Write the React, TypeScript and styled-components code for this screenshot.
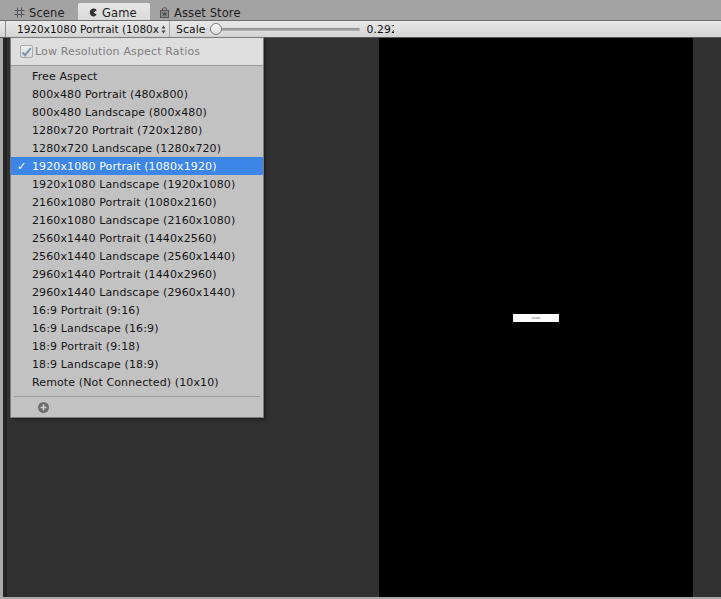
import React from "react";
import styled, { createGlobalStyle } from "styled-components";

const Global = createGlobalStyle`
  html, body { margin: 0; padding: 0; background: #a2a2a2; }
  body { font-family: "DejaVu Sans", Verdana, sans-serif; font-size: 11px; }
  * { box-sizing: border-box; }
`;

const Window = styled.div`
  position: relative;
  width: 721px;
  height: 599px;
  background: #a2a2a2;
  display: flex;
  flex-direction: column;
  overflow: hidden;
`;

const TabBar = styled.div`
  height: 20px;
  display: flex;
  align-items: flex-end;
  padding-left: 9px;
  background: #a3a3a3;
`;

const Tab = styled.div<{ $active?: boolean; $w: number }>`
  width: ${(p) => p.$w}px;
  height: 17px;
  display: flex;
  align-items: center;
  gap: 4px;
  padding-top: 2px;
  padding-left: ${(p) => (p.$active ? 11 : 5)}px;
  color: #1e1e1e;
  font-size: 11.5px;
  letter-spacing: 0.1px;
  background: ${(p) => (p.$active ? "linear-gradient(#e6e6e6, #dadada)" : "transparent")};
  border-radius: 2px 2px 0 0;
  margin-right: ${(p) => (p.$active ? 4 : 3)}px;
`;

const TabIcon = styled.svg`
  flex: none;
`;

const Toolbar = styled.div`
  height: 18px;
  display: flex;
  align-items: center;
  background: linear-gradient(#e8e8e8, #d4d4d4);
  border-top: 1px solid #6f6f6f;
  border-bottom: 1px solid #5a5a5a;
  padding-left: 5px;
`;

const EdgeTick = styled.div`
  width: 1px;
  height: 100%;
  background: #8a8a8a;
  margin-right: 4px;
`;

const Popup = styled.div`
  width: 160px;
  flex: none;
  height: 100%;
  display: flex;
  align-items: center;
  justify-content: space-between;
  padding: 0 3px 0 7px;
  color: #111;
  font-size: 10.5px;
  border-right: 1px solid #a8a8a8;
  white-space: nowrap;
`;

const Arrows = styled.svg`
  flex: none;
`;

const Label = styled.span`
  margin-left: 6px;
  color: #111;
  font-size: 10.8px;
  letter-spacing: 0.1px;
`;

const Slider = styled.div`
  position: relative;
  margin-left: 4px;
  width: 150px;
  height: 12px;
  display: flex;
  align-items: center;
`;

const Track = styled.div`
  flex: 1;
  height: 3px;
  border-radius: 2px;
  background: linear-gradient(#8a8a8a, #b8b8b8);
`;

const Thumb = styled.div`
  position: absolute;
  left: 0;
  top: 0;
  width: 12px;
  height: 12px;
  border-radius: 50%;
  border: 1px solid #7a7a7a;
  background: linear-gradient(#fdfdfd, #dcdcdc);
`;

const Value = styled.div`
  margin-left: 7px;
  width: 27px;
  overflow: hidden;
  white-space: nowrap;
  font-size: 10.8px;
  letter-spacing: 0.1px;
  color: #111;
`;

const Body = styled.div`
  flex: 1;
  display: flex;
  border-bottom: 2px solid #a9a9a9;
`;

const LeftEdge = styled.div`
  width: 3px;
  background: #a8a8a8;
`;

const DarkEdge = styled.div`
  width: 4px;
  background: #232323;
`;

const GameView = styled.div`
  flex: 1;
  background: #313131;
  display: flex;
  padding-left: 372px;
`;

const Screen = styled.div`
  width: 314px;
  background: #000;
  display: flex;
  align-items: center;
  justify-content: center;
`;

const Badge = styled.div`
  width: 46px;
  height: 8px;
  background: #fff;
  color: #444;
  font-size: 3px;
  display: flex;
  align-items: center;
  justify-content: center;
  margin-top: 1px;
`;

const Menu = styled.div`
  position: absolute;
  left: 10px;
  top: 37px;
  width: 254px;
  height: 381px;
  background: #c2c2c2;
  border: 1px solid #7c7c7c;
  box-shadow: 2px 2px 3px rgba(0, 0, 0, 0.35);
  display: flex;
  flex-direction: column;
`;

const MenuHeader = styled.div`
  height: 28px;
  background: #dedede;
  border-bottom: 1px solid #9c9c9c;
  display: flex;
  align-items: center;
  padding-left: 9px;
  gap: 2px;
  color: #7e7e7e;
  font-size: 11px;
  letter-spacing: 0.15px;
`;

const Check = styled.div`
  width: 13px;
  height: 13px;
  border: 1px solid #a9a9a9;
  border-radius: 2px;
  background: linear-gradient(#f0f0f0, #d8d8d8);
  display: flex;
  align-items: center;
  justify-content: center;
`;

const List = styled.div`
  padding-top: 1px;
  display: flex;
  flex-direction: column;
`;

const Item = styled.div<{ $selected?: boolean }>`
  height: 18px;
  display: flex;
  align-items: center;
  padding-left: 6px;
  color: ${(p) => (p.$selected ? "#fff" : "#151515")};
  background: ${(p) => (p.$selected ? "#3b86e6" : "transparent")};
  white-space: nowrap;
  font-size: 11px;
  letter-spacing: 0.12px;
`;

const Mark = styled.span`
  width: 15px;
  font-weight: bold;
  font-size: 11px;
`;

const Separator = styled.div`
  height: 1px;
  margin: 5px 3px 0 3px;
  background: #9a9a9a;
`;

const Footer = styled.div`
  height: 20px;
  display: flex;
  align-items: center;
  padding-left: 27px;
`;

const items = [
  "Free Aspect",
  "800x480 Portrait (480x800)",
  "800x480 Landscape (800x480)",
  "1280x720 Portrait (720x1280)",
  "1280x720 Landscape (1280x720)",
  "1920x1080 Portrait (1080x1920)",
  "1920x1080 Landscape (1920x1080)",
  "2160x1080 Portrait (1080x2160)",
  "2160x1080 Landscape (2160x1080)",
  "2560x1440 Portrait (1440x2560)",
  "2560x1440 Landscape (2560x1440)",
  "2960x1440 Portrait (1440x2960)",
  "2960x1440 Landscape (2960x1440)",
  "16:9 Portrait (9:16)",
  "16:9 Landscape (16:9)",
  "18:9 Portrait (9:18)",
  "18:9 Landscape (18:9)",
  "Remote (Not Connected) (10x10)",
];

export default function App() {
  return (
    <Window>
      <Global />
      <TabBar>
        <Tab $w={66}>
          <TabIcon width="11" height="11" viewBox="0 0 11 11">
            <path d="M3.5 0.5V10.5M7.5 0.5V10.5M0.5 3.5H10.5M0.5 7.5H10.5" stroke="#555" strokeWidth="1" fill="none" />
          </TabIcon>
          Scene
        </Tab>
        <Tab $active $w={72}>
          <TabIcon width="9" height="9" viewBox="0 0 9 9">
            <path d="M7.8 2.2A3.9 3.9 0 1 0 7.8 6.8L4.5 4.5Z" fill="#333" />
          </TabIcon>
          Game
        </Tab>
        <Tab $w={95}>
          <TabIcon width="11" height="11" viewBox="0 0 11 11">
            <path d="M3.5 3V2a2 1.2 0 0 1 4 0V3" stroke="#555" fill="none" />
            <rect x="1.5" y="3.5" width="8" height="7" fill="#8a8a8a" stroke="#555" />
            <rect x="3.5" y="5.5" width="4" height="3" fill="#555" />
          </TabIcon>
          Asset Store
        </Tab>
      </TabBar>
      <Toolbar>
        <EdgeTick />
        <Popup>
          <span>1920x1080 Portrait (1080x</span>
          <Arrows width="5" height="9" viewBox="0 0 5 9">
            <path d="M2.5 0.5L4.5 3.5H0.5Z M2.5 8.5L4.5 5.5H0.5Z" fill="#444" />
          </Arrows>
        </Popup>
        <Label>Scale</Label>
        <Slider>
          <Track />
          <Thumb />
        </Slider>
        <Value>0.292</Value>
      </Toolbar>
      <Body>
        <LeftEdge />
        <DarkEdge />
        <GameView>
          <Screen>
            <Badge>Score</Badge>
          </Screen>
        </GameView>
      </Body>
      <Menu>
        <MenuHeader>
          <Check>
            <svg width="11" height="10" viewBox="0 0 11 10">
              <path d="M1.5 5.5L4 8.2L9.8 1.2" stroke="#7d95b4" strokeWidth="2" fill="none" />
            </svg>
          </Check>
          Low Resolution Aspect Ratios
        </MenuHeader>
        <List>
          {items.map((t) => {
            const sel = t === "1920x1080 Portrait (1080x1920)";
            return (
              <Item key={t} $selected={sel}>
                <Mark>{sel ? "✓" : ""}</Mark>
                {t}
              </Item>
            );
          })}
        </List>
        <Separator />
        <Footer>
          <svg width="11" height="11" viewBox="0 0 11 11">
            <circle cx="5.5" cy="5.5" r="5.5" fill="#6e6e6e" />
            <path d="M5.5 2.5V8.5M2.5 5.5H8.5" stroke="#d0d0d0" strokeWidth="1.6" />
          </svg>
        </Footer>
      </Menu>
    </Window>
  );
}
